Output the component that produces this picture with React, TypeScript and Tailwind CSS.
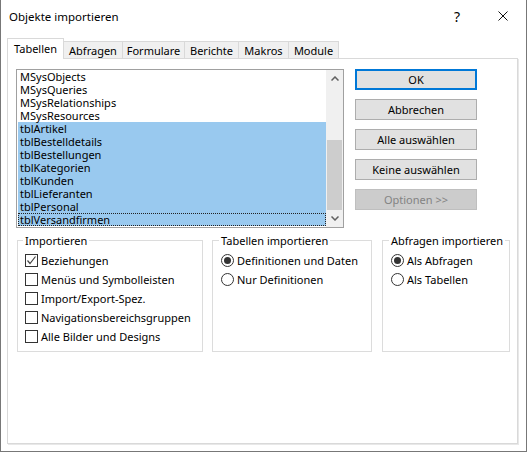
import React from 'react';

const items = [
  'MSysObjects',
  'MSysQueries',
  'MSysRelationships',
  'MSysResources',
  'tblArtikel',
  'tblBestelldetails',
  'tblBestellungen',
  'tblKategorien',
  'tblKunden',
  'tblLieferanten',
  'tblPersonal',
  'tblVersandfirmen',
];

const tabs = [
  { label: 'Abfragen', w: 'w-[60px]' },
  { label: 'Formulare', w: 'w-[63px]' },
  { label: 'Berichte', w: 'w-[55px]' },
  { label: 'Makros', w: 'w-[51px]' },
  { label: 'Module', w: 'w-[51px]' },
];

const Checkbox = ({ checked, label }: { checked?: boolean; label: string }) => (
  <div className="flex items-center h-[19px]">
    <span className="w-[13px] h-[13px] border border-[#333] bg-white flex items-center justify-center shrink-0">
      {checked && (
        <svg width="11" height="11" viewBox="0 0 11 11">
          <polyline points="1.5,5.5 4,8.5 9.5,1.5" fill="none" stroke="#444" strokeWidth="1.2" />
        </svg>
      )}
    </span>
    <span className="ml-[3px] whitespace-nowrap">{label}</span>
  </div>
);

const Radio = ({ checked, label }: { checked?: boolean; label: string }) => (
  <div className="flex items-center h-[19px]">
    <span className="w-[13px] h-[13px] rounded-full border border-[#333] bg-white flex items-center justify-center shrink-0">
      {checked && <span className="w-[7px] h-[7px] rounded-full bg-[#333]" />}
    </span>
    <span className="ml-[3px] whitespace-nowrap">{label}</span>
  </div>
);

const Button = ({ children, primary, disabled }: { children: React.ReactNode; primary?: boolean; disabled?: boolean }) => (
  <div
    className={
      primary
        ? 'h-[21px] border-2 border-[#0078d7] bg-[#e1e1e1] flex items-center justify-center'
        : disabled
        ? 'h-[21px] border border-[#bfbfbf] bg-[#cccccc] text-[#838383] flex items-center justify-center'
        : 'h-[21px] border border-[#adadad] bg-[#e1e1e1] flex items-center justify-center'
    }
  >
    {children}
  </div>
);

export default function App() {
  return (
    <div className="w-[527px] h-[452px] bg-white border-x border-b border-[#777] flex flex-col font-['Noto_Sans',sans-serif] text-[11px] text-black leading-[15px]">
      {/* title bar */}
      <div className="h-[32px] flex items-center pl-[8px] shrink-0 text-[11.5px]">
        <span className="flex-1">Objekte importieren</span>
        <span className="w-[46px] text-center text-[14px]">?</span>
        <span className="w-[46px] flex justify-center">
          <svg width="10" height="10" viewBox="0 0 10 10">
            <path d="M0.5 0.5 L9.5 9.5 M9.5 0.5 L0.5 9.5" stroke="#111" strokeWidth="1" />
          </svg>
        </span>
      </div>

      <div className="pl-[6px] pt-[6px]">
        {/* tabs */}
        <div className="flex items-end h-[20px]">
          <div className="relative z-10 w-[57px] h-[21px] -mb-px border border-b-0 border-[#d9d9d9] bg-white flex items-center justify-center pb-[2px]">
            Tabellen
          </div>
          {tabs.map((t) => (
            <div
              key={t.label}
              className={`${t.w} h-[17px] -ml-px border border-b-0 border-[#d9d9d9] bg-[#f0f0f0] flex items-center justify-center`}
            >
              {t.label}
            </div>
          ))}
        </div>

        {/* panel */}
        <div className="w-[511px] h-[386px] border border-[#d9d9d9] shadow-[1px_1px_0_0_#e8e8e8] bg-white pt-[10px] pl-[8px] flex flex-col">
          <div className="flex">
            {/* listbox */}
            <div className="w-[328px] h-[159px] border border-[#a0a0a0] flex">
              <ul className="flex-1 pl-[1px]">
                {items.map((it, i) => (
                  <li
                    key={it}
                    className={
                      'h-[13px] leading-[13px] pl-[2px] ' +
                      (i >= 4 ? 'bg-[#99c9ef] ' : '') +
                      (i === items.length - 1 ? 'outline outline-1 outline-dotted outline-[#222] -outline-offset-1' : '')
                    }
                  >
                    {it}
                  </li>
                ))}
              </ul>
              <div className="w-[17px] bg-[#f0f0f0] flex flex-col">
                <div className="h-[17px] flex items-center justify-center">
                  <svg width="8" height="5" viewBox="0 0 8 5">
                    <path d="M0.5 4.5 L4 1 L7.5 4.5" fill="none" stroke="#606060" strokeWidth="1.5" />
                  </svg>
                </div>
                <div className="flex-1 flex flex-col justify-end px-[1px]">
                  <div className="h-[70px] bg-[#cdcdcd]" />
                </div>
                <div className="h-[17px] flex items-center justify-center">
                  <svg width="8" height="5" viewBox="0 0 8 5">
                    <path d="M0.5 0.5 L4 4 L7.5 0.5" fill="none" stroke="#606060" strokeWidth="1.5" />
                  </svg>
                </div>
              </div>
            </div>

            {/* buttons */}
            <div className="ml-[11px] w-[122px] flex flex-col gap-[9px]">
              <Button primary>OK</Button>
              <Button>Abbrechen</Button>
              <Button>Alle auswählen</Button>
              <Button>Keine auswählen</Button>
              <Button disabled>Optionen &gt;&gt;</Button>
            </div>
          </div>

          {/* group boxes */}
          <div className="flex mt-[5px]">
            <fieldset className="ml-[1px] w-[186px] h-[119px] border border-[#dcdcdc] pl-[7px]">
              <legend className="px-[2px] -ml-[2px] whitespace-nowrap">Importieren</legend>
              <div className="pt-[3px]">
                <Checkbox checked label="Beziehungen" />
                <Checkbox label="Menüs und Symbolleisten" />
                <Checkbox label="Import/Export-Spez." />
                <Checkbox label="Navigationsbereichsgruppen" />
                <Checkbox label="Alle Bilder und Designs" />
              </div>
            </fieldset>
            <fieldset className="ml-[9px] w-[160px] h-[119px] border border-[#dcdcdc] pl-[8px]">
              <legend className="px-[2px] -ml-[2px] whitespace-nowrap">Tabellen importieren</legend>
              <div className="pt-[3px]">
                <Radio checked label="Definitionen und Daten" />
                <Radio label="Nur Definitionen" />
              </div>
            </fieldset>
            <fieldset className="ml-[10px] w-[128px] h-[119px] border border-[#dcdcdc] pl-[8px]">
              <legend className="px-[2px] -ml-[2px] whitespace-nowrap">Abfragen importieren</legend>
              <div className="pt-[3px]">
                <Radio checked label="Als Abfragen" />
                <Radio label="Als Tabellen" />
              </div>
            </fieldset>
          </div>
        </div>
      </div>
    </div>
  );
}
